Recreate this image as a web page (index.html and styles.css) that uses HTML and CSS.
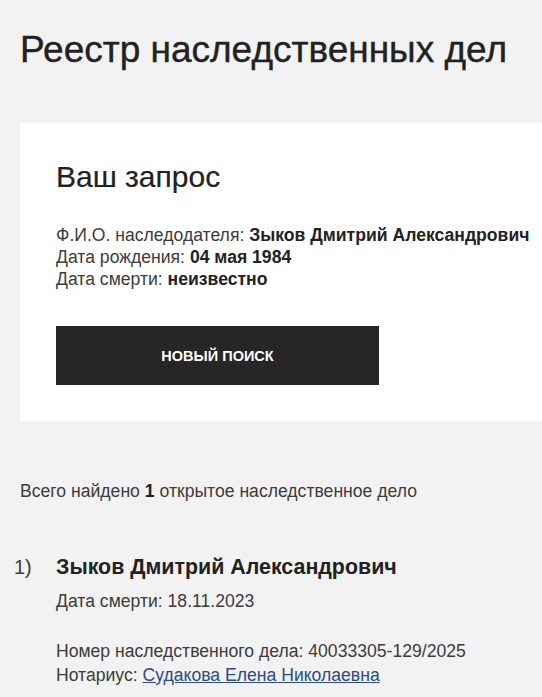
FILE: index.html
```html
<!DOCTYPE html>
<html lang="ru">
<head>
<meta charset="utf-8">
<title>Реестр наследственных дел</title>
<link rel="stylesheet" href="styles.css">
</head>
<body>
<div class="page">
  <h1 class="title">Реестр наследственных дел</h1>
  <section class="card">
    <h2 class="card-title">Ваш запрос</h2>
    <div class="info">
      <div>Ф.И.О. наследодателя: <b>Зыков Дмитрий Александрович</b></div>
      <div>Дата рождения: <b>04 мая 1984</b></div>
      <div>Дата смерти: <b>неизвестно</b></div>
    </div>
    <button class="btn" type="button">НОВЫЙ ПОИСК</button>
  </section>
  <p class="total">Всего найдено <b>1</b> открытое наследственное дело</p>
  <div class="item">
    <div class="num">1)</div>
    <div class="item-body">
      <div class="item-name">Зыков Дмитрий Александрович</div>
      <div class="item-date">Дата смерти: 18.11.2023</div>
      <div class="item-meta">
        <div>Номер наследственного дела: 40033305-129/2025</div>
        <div>Нотариус: <a class="link" href="#">Судакова Елена Николаевна</a></div>
      </div>
    </div>
  </div>
</div>
</body>
</html>
```
FILE: styles.css
```css
html, body {
  margin: 0;
  padding: 0;
  background: #f2f2f2;
}
body {
  font-family: "Liberation Sans", Arial, sans-serif;
  color: #222;
  overflow: hidden;
}
.page {
  padding: 28px 0 0 20px;
}
.title {
  margin: 0;
  font-size: 37px;
  line-height: 44px;
  font-weight: normal;
  color: #222;
  -webkit-text-stroke: 0.4px #222;
  white-space: nowrap;
}
.card {
  margin-top: 51px;
  background: #fff;
  padding: 36px 0 36px 36px;
  white-space: nowrap;
}
.card-title {
  margin: 0;
  font-size: 30px;
  line-height: 36px;
  font-weight: normal;
  -webkit-text-stroke: 0.2px #222;
}
.info {
  margin-top: 29px;
  font-size: 17.6px;
  line-height: 22px;
  color: #3c3c3c;
}
.info b {
  color: #222;
}
.btn {
  display: block;
  margin-top: 36px;
  width: 323px;
  height: 59px;
  border: 0;
  background: #262626;
  color: #fff;
  font-family: "Liberation Sans", Arial, sans-serif;
  font-size: 14.5px;
  font-weight: bold;
  padding: 0;
}
.total {
  margin: 59px 0 0 0;
  font-size: 17.6px;
  line-height: 22px;
  color: #3c3c3c;
  white-space: nowrap;
}
.total b {
  color: #222;
}
.item {
  margin-top: 52px;
  display: flex;
  margin-left: -6px;
  white-space: nowrap;
}
.num {
  width: 42px;
  font-size: 20px;
  line-height: 26px;
  color: #3c3c3c;
}
.item-name {
  font-size: 21.4px;
  line-height: 26px;
  font-weight: bold;
  color: #222;
}
.item-date {
  margin-top: 10px;
  font-size: 17.6px;
  line-height: 22px;
  color: #3c3c3c;
}
.item-meta {
  margin-top: 27px;
  font-size: 17.6px;
  line-height: 24px;
  color: #3c3c3c;
}
.link {
  color: #2d4a8a;
  text-decoration: underline;
}
```
